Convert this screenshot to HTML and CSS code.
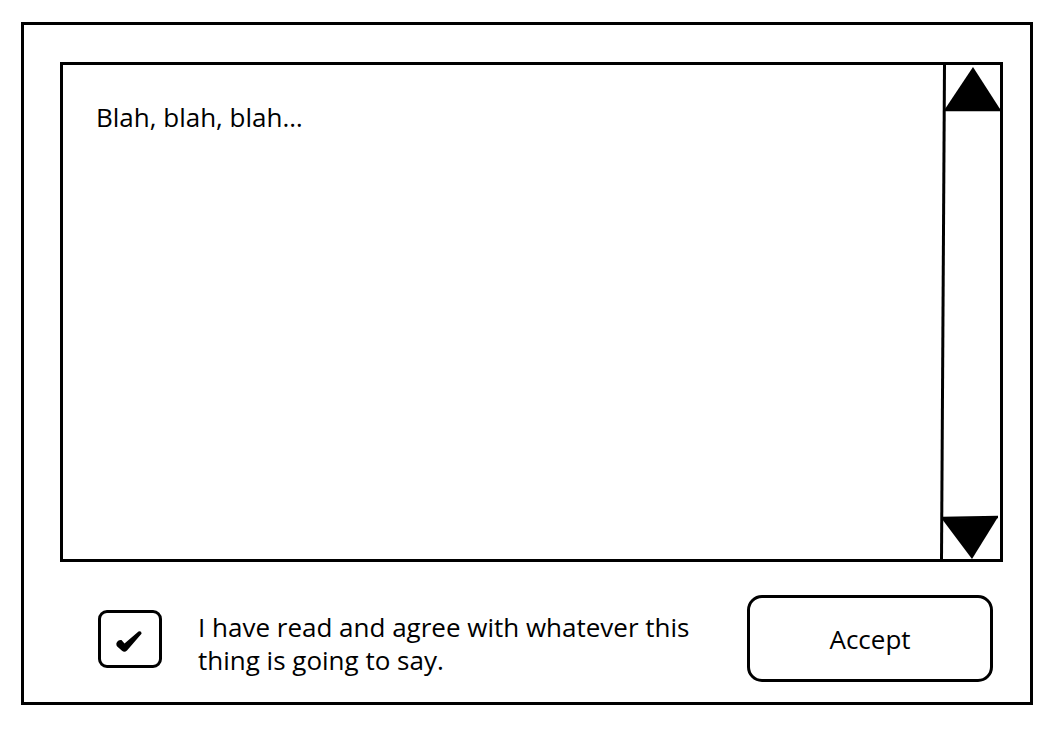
FILE: index.html
```html
<!DOCTYPE html>
<html>
<head>
<meta charset="utf-8">
<link rel="stylesheet" href="styles.css">
</head>
<body>
<div class="frame">
  <div class="textbox">
    <div class="content">Blah, blah, blah…</div>
    <svg class="scrollbar" width="60" height="494" viewBox="0 0 60 494">
      <line x1="4.5" y1="0" x2="1.5" y2="494" stroke="#000" stroke-width="3"/>
      <polygon points="33,2 5,44 60,44" fill="#000"/>
      <line x1="4" y1="45" x2="60" y2="45" stroke="#000" stroke-width="2.5"/>
      <polygon points="2,454 58,452 32,494" fill="#000"/>
      <line x1="2" y1="453" x2="58" y2="452" stroke="#000" stroke-width="2.5"/>
    </svg>
  </div>
  <div class="bottom">
    <div class="checkbox">
      <svg width="26" height="21" viewBox="0 0 26 21"><path d="M0.5 12 Q2 8.5 5.5 9 L8.5 12.5 L22.5 0.5 Q25.8 -0.2 25.5 2.8 L11 19.5 Q8.5 21.8 6 19.8 L1.2 15.5 Q0 14 0.5 12 Z" fill="#000"/></svg>
    </div>
    <div class="label">I have read and agree with whatever this<br>thing is going to say.</div>
    <button class="accept">Accept</button>
  </div>
</div>
</body>
</html>
```
FILE: styles.css
```css
html, body {
  margin: 0;
  padding: 0;
  background: #fff;
}
body {
  font-family: "Open Sans", sans-serif;
  color: #000;
}
.frame {
  margin: 22px 0 0 21px;
  border: 3px solid #000;
  padding: 37px 27px 20px 36px;
  box-sizing: border-box;
  width: 1012px;
  height: 683px;
  display: flex;
  flex-direction: column;
}
.textbox {
  height: 500px;
  box-sizing: border-box;
  border: 3px solid #000;
  display: flex;
  flex-direction: row;
}
.content {
  flex: 1;
  padding: 37px 0 0 33px;
  font-size: 26px;
  line-height: 30px;
}
.scrollbar {
  display: block;
  flex: none;
}
.bottom {
  margin-top: 33px;
  display: flex;
  flex-direction: row;
  align-items: flex-start;
  padding: 0 10px 0 38px;
}
.checkbox {
  flex: none;
  width: 64px;
  height: 58px;
  box-sizing: border-box;
  border: 3px solid #000;
  border-radius: 9px;
  margin-top: 15px;
  display: flex;
  align-items: center;
  justify-content: center;
}
.checkbox svg {
  display: block;
  margin: 4px 2px 0 0;
}
.label {
  flex: 1;
  margin-left: 36px;
  margin-top: 16px;
  font-size: 26px;
  line-height: 33px;
}
.accept {
  flex: none;
  width: 246px;
  height: 87px;
  box-sizing: border-box;
  border: 3px solid #000;
  border-radius: 15px;
  background: #fff;
  font-family: "Open Sans", sans-serif;
  font-size: 26px;
  color: #000;
  padding: 0;
}
```
